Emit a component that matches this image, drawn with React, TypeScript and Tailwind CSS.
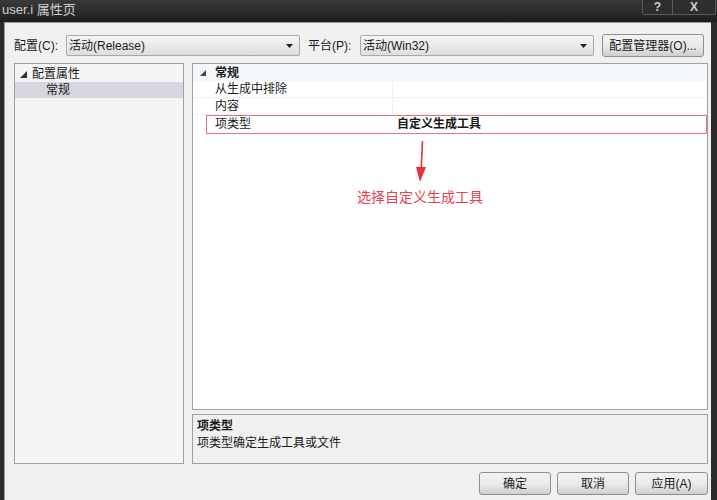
import React from 'react';

const font = { fontFamily: '"Liberation Sans", "Noto Sans CJK SC", sans-serif' };

const Dropdown: React.FC<{ value: string; className?: string }> = ({ value, className = '' }) => (
  <div
    className={`h-[21px] flex items-center justify-between border border-[#a9a9a9] rounded-[2px] bg-gradient-to-b from-[#f6f6f6] to-[#dedede] pl-[2px] pr-[6px] ${className}`}
  >
    <span className="text-[12px] text-[#1a1a1a] leading-none">{value}</span>
    <svg width="7" height="4" viewBox="0 0 7 4">
      <path d="M0 0 H7 L3.5 4 Z" fill="#222" />
    </svg>
  </div>
);

const Button: React.FC<{ label: string; className?: string }> = ({ label, className = '' }) => (
  <div
    className={`h-[23px] flex items-center justify-center border border-[#8e8f8f] rounded-[3px] bg-gradient-to-b from-[#f2f2f2] via-[#ebebeb] to-[#cfcfcf] text-[12px] text-[#1a1a1a] ${className}`}
  >
    {label}
  </div>
);

const GridRow: React.FC<{ name: string; value?: string; bold?: boolean }> = ({ name, value = '', bold }) => (
  <div className="h-[17px] flex border-b border-[#f0f0f0]">
    <div className="w-[200px] pl-[22px] text-[12px] leading-[16px] text-[#1a1a1a] border-r border-[#f0f0f0]">{name}</div>
    <div className={`flex-1 pl-[4px] text-[12px] leading-[16px] text-[#1a1a1a] ${bold ? 'font-bold' : ''}`}>{value}</div>
  </div>
);

export default function App() {
  return (
    <div className="w-[717px] h-[500px] overflow-hidden bg-[#2b2b2b] flex flex-col" style={font}>
      {/* Title bar */}
      <div className="h-[22px] flex items-start justify-between bg-gradient-to-b from-[#3a3a3a] to-[#1e1e1e]">
        <span className="pl-[2px] pt-[2px] text-[13px] text-[#cfcfcf] leading-[16px]">user.i 属性页</span>
        <div className="flex h-[15px] mr-[1px] border border-t-0 border-[#5a5a5a] rounded-b-[3px] overflow-hidden">
          <div className="w-[30px] flex items-center justify-center text-[12px] font-bold text-[#d0d0d0] border-r border-[#5a5a5a] bg-[#2e2e2e]">?</div>
          <div className="w-[42px] flex items-center justify-center text-[12px] font-bold text-[#d0d0d0] bg-[#2e2e2e]">X</div>
        </div>
      </div>

      {/* Client area */}
      <div className="flex-1 ml-[4px] mr-[6px] bg-[#f0f0f0] border-t border-l border-[#9a9a9a] flex flex-col pl-[9px] pr-[3px] pt-[11px]">
        {/* Config row */}
        <div className="flex items-center h-[23px]">
          <span className="w-[52px] text-[12px] text-[#1a1a1a]">配置(C):</span>
          <Dropdown value="活动(Release)" className="w-[234px]" />
          <span className="ml-[8px] w-[52px] text-[12px] text-[#1a1a1a]">平台(P):</span>
          <Dropdown value="活动(Win32)" className="w-[234px]" />
          <Button label="配置管理器(O)..." className="ml-[8px] w-[102px]" />
        </div>

        {/* Main panels */}
        <div className="flex mt-[6px] gap-[8px]">
          {/* Tree */}
          <div className="w-[170px] h-[401px] border border-[#a0a0a0] bg-[#f5f5f5] pt-[2px]">
            <div className="h-[16px] flex items-center pl-[5px] text-[12px] text-[#1a1a1a]">
              <svg width="7" height="7" viewBox="0 0 7 7" className="mr-[5px]">
                <path d="M7 0 V7 H0 Z" fill="#333" />
              </svg>
              配置属性
            </div>
            <div className="h-[16px] flex items-center pl-[31px] bg-[#d5d6df] text-[12px] text-[#1a1a1a]">常规</div>
          </div>

          {/* Right column */}
          <div className="flex-1 flex flex-col gap-[4px]">
            <div className="h-[347px] border border-[#a0a0a0] bg-white flex flex-col">
              <div className="h-[17px] flex items-center bg-[#f3f6fa] pl-[7px] text-[12px] font-bold text-[#1a1a1a]">
                <svg width="6" height="6" viewBox="0 0 6 6" className="mr-[9px]">
                  <path d="M6 0 V6 H0 Z" fill="#444" />
                </svg>
                常规
              </div>
              <GridRow name="从生成中排除" />
              <GridRow name="内容" />
              <div className="ml-[13px] border border-[#e0757f] h-[19px] flex">
                <div className="w-[187px] pl-[8px] text-[12px] leading-[17px] text-[#1a1a1a]">项类型</div>
                <div className="flex-1 pl-[3px] text-[12px] leading-[17px] font-bold text-[#1a1a1a]">自定义生成工具</div>
              </div>
              <div className="flex flex-col items-center mt-[7px] pr-[60px]">
                <svg width="14" height="44" viewBox="0 0 14 44" className="ml-[2px]">
                  <path d="M8.5 0 L7.2 28" stroke="#e8313b" strokeWidth="1.6" fill="none" />
                  <path d="M2 26 L12 26 L6 41 Z" fill="#e8313b" />
                </svg>
                <span className="mt-[1px] text-[14px] text-[#e8424c]" style={{ fontFamily: '"Noto Sans CJK SC", sans-serif' }}>选择自定义生成工具</span>
              </div>
            </div>
            <div className="h-[50px] border border-[#a0a0a0] bg-[#f0f0f0] pl-[4px] pt-[3px]">
              <div className="text-[12px] font-bold text-[#1a1a1a] leading-[17px]">项类型</div>
              <div className="text-[12px] text-[#1a1a1a] leading-[17px]">项类型确定生成工具或文件</div>
            </div>
          </div>
        </div>

        {/* Bottom buttons */}
        <div className="flex justify-end gap-[6px] mt-[8px]">
          <Button label="确定" className="w-[72px]" />
          <Button label="取消" className="w-[72px]" />
          <Button label="应用(A)" className="w-[73px]" />
        </div>
      </div>
    </div>
  );
}
